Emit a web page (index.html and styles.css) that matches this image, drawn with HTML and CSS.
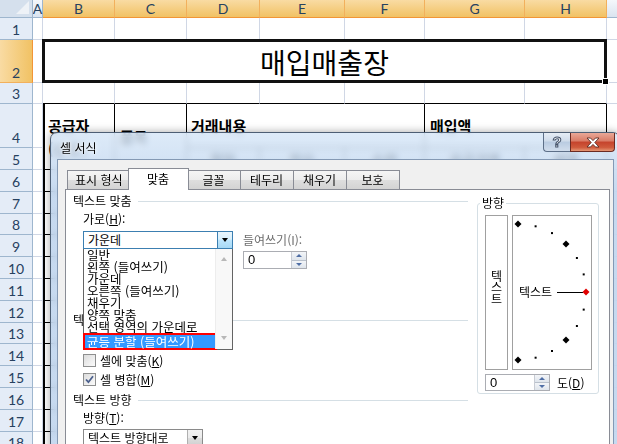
FILE: index.html
```html
<!DOCTYPE html>
<html lang="ko">
<head>
    <meta charset="UTF-8">
    <title>매입매출장 - 셀 서식</title>
    <link rel="stylesheet" href="styles.css">
</head>
<body>

<div class="window">
    <!-- 시트 눈금 (스크립트로 채움) -->
    <div class="sheet" id="sheet"></div>

    <!-- 병합된 셀과 내용 -->
    <div class="sheet sheet-over">
        <div class="merge title-cell">매입매출장</div>
        <div class="merge th b4">공급자<br>(상호)</div>
        <div class="merge th c4">품목</div>
        <div class="merge th d4">거래내용</div>
        <div class="merge th g4">매입액</div>
        <div class="merge sub d5">월일</div>
        <div class="merge sub e5">적요</div>
        <div class="merge sub f5">수량</div>
        <div class="merge sub g5">공급가액</div>
        <div class="merge sub h5">세액</div>
    </div>

    <div class="dialog">
        <div class="title-bar">
            <span class="title">셀 서식</span>
            <div class="caption-btns">
                <div class="cap-btn help">?</div>
                <div class="cap-btn close">
                    <svg width="14" height="11" viewBox="0 0 14 11">
                        <path d="M1 1 L4.5 1 L7 3.6 L9.5 1 L13 1 L8.8 5.5 L13 10 L9.5 10 L7 7.4 L4.5 10 L1 10 L5.2 5.5 Z" fill="#fff" stroke="#5a2a22" stroke-width="0.9"/>
                    </svg>
                </div>
            </div>
        </div>

        <div class="client">
            <div class="tabs">
                <div class="tab">표시 형식</div>
                <div class="tab active">맞춤</div>
                <div class="tab">글꼴</div>
                <div class="tab">테두리</div>
                <div class="tab">채우기</div>
                <div class="tab">보호</div>
            </div>

            <div class="panel">
                <div class="left-col">
                    <div class="group-title">텍스트 맞춤</div>
                    <div class="field-label">가로(<u>H</u>):</div>
                    <div class="combo-row">
                        <div class="combo-wrap">
                            <div class="combo hot">
                                <span class="combo-text">가운데</span>
                                <span class="drop"></span>
                            </div>
                            <div class="droplist">
                                <ul>
                                    <li>일반</li>
                                    <li>왼쪽 (들여쓰기)</li>
                                    <li>가운데</li>
                                    <li>오른쪽 (들여쓰기)</li>
                                    <li>채우기</li>
                                    <li>양쪽 맞춤</li>
                                    <li>선택 영역의 가운데로</li>
                                    <li class="pick">균등 분할 (들여쓰기)</li>
                                </ul>
                                <div class="list-scroll">
                                    <span class="arr up"></span>
                                    <span class="arr down"></span>
                                </div>
                            </div>
                        </div>
                        <div class="indent">
                            <div class="indent-label">들여쓰기(I):</div>
                            <div class="spin">
                                <span class="spin-val">0</span>
                                <span class="spin-btns"><i class="s-up"></i><i class="s-down"></i></span>
                            </div>
                        </div>
                    </div>

                    <div class="group-title ctrl">텍스트 조정</div>
                    <div class="check first"><span class="box"></span>셀에 맞춤(<u>K</u>)</div>
                    <div class="check"><span class="box on">
                        <svg width="9" height="9" viewBox="0 0 9 9"><path d="M1 4.5 L3.4 7.2 L8 1.2" fill="none" stroke="#4a5f8c" stroke-width="1.8"/></svg>
                    </span>셀 병합(<u>M</u>)</div>

                    <div class="group-title dir-title">텍스트 방향</div>
                    <div class="field-label">방향(<u>T</u>):</div>
                    <div class="combo dir-combo">
                        <span class="combo-text">텍스트 방향대로</span>
                        <span class="drop plain"></span>
                    </div>
                </div>

                <fieldset class="orient">
                    <legend>방향</legend>
                    <div class="orient-boxes">
                        <div class="vtext">텍스트</div>
                        <div class="dial">
                            <svg width="78" height="153" viewBox="0 0 78 153">
                                <g fill="#000">
                                    <rect x="21.6" y="9.3" width="2" height="2"/>
                                    <rect x="38" y="16.1" width="2" height="2"/>
                                    <rect x="62.9" y="41" width="2" height="2"/>
                                    <rect x="69.7" y="57.4" width="2" height="2"/>
                                    <rect x="69.7" y="92.6" width="2" height="2"/>
                                    <rect x="62.9" y="109" width="2" height="2"/>
                                    <rect x="38" y="134" width="2" height="2"/>
                                    <rect x="21.6" y="140.7" width="2" height="2"/>
                                    <path d="M5 4.5 L8.5 8 L5 11.5 L1.5 8 Z"/>
                                    <path d="M53 24.5 L56.5 28 L53 31.5 L49.5 28 Z"/>
                                    <path d="M53 120.5 L56.5 124 L53 127.5 L49.5 124 Z"/>
                                    <path d="M5 140.5 L8.5 144 L5 147.5 L1.5 144 Z"/>
                                </g>
                                <text x="6" y="80.5" class="dial-text">텍스트</text>
                                <line x1="44" y1="76.5" x2="70" y2="76.5" stroke="#000" stroke-width="1"/>
                                <path d="M73 72.5 L76.5 76 L73 79.5 L69.5 76 Z" fill="#e00000"/>
                            </svg>
                        </div>
                    </div>
                    <div class="deg-row">
                        <div class="spin deg">
                            <span class="spin-val">0</span>
                            <span class="spin-btns"><i class="s-up"></i><i class="s-down"></i></span>
                        </div>
                        <span class="deg-label">도(<u>D</u>)</span>
                    </div>
                </fieldset>
            </div>
        </div>
    </div>
</div>

<script>
    const sheet = document.getElementById('sheet');
    const cols = ['A', 'B', 'C', 'D', 'E', 'F', 'G', 'H', 'I'];
    const rowCount = 18;

    function addCell(cls, text) {
        const div = document.createElement('div');
        div.className = cls;
        if (text !== undefined) div.textContent = text;
        sheet.appendChild(div);
    }

    // 머리글 행
    addCell('corner');
    cols.forEach((c, i) => addCell('col-head' + (i >= 1 && i <= 7 ? ' sel' : ''), c));

    // 데이터 행
    for (let r = 1; r <= rowCount; r++) {
        addCell('row-head' + (r === 2 ? ' sel' : ''), r);
        cols.forEach((c, i) => {
            let cls = 'cell';
            if (i >= 1 && i <= 7) {
                if (r === 3) cls += ' tb-top';
                if (r >= 4) cls += ' tb';
                if (i === 1 && r >= 4) cls += ' tb-left';
            }
            addCell(cls);
        });
    }
</script>

</body>
</html>
```

FILE: styles.css
```css
body {
    margin: 0;
    background: #fff;
    font-family: "Noto Sans CJK KR", sans-serif;
    font-size: 12px;
    color: #000;
}
.window {
    position: relative;
    width: 617px;
    height: 444px;
    overflow: hidden;
}

/* ---- 시트 ---- */
.sheet {
    display: grid;
    grid-template-columns: 33px 10px 72px 72px 73px 85px 80px 100px 82px 40px;
    grid-template-rows: 18px 22px 43px 21px 44px 22px repeat(13, 21.8px);
}
.sheet > div {
    box-sizing: border-box;
}
.sheet-over {
    position: absolute;
    left: 0;
    top: 0;
}
.corner {
    position: relative;
    background: #d5e0ed;
    border-right: 1px solid #9eb6ce;
    border-bottom: 1px solid #9eb6ce;
}
.corner::after {
    content: "";
    position: absolute;
    right: 3px;
    bottom: 3px;
    border-left: 13px solid transparent;
    border-bottom: 13px solid #eef2f7;
}
.col-head, .row-head {
    font-family: Lato, "Liberation Sans", sans-serif;
    font-size: 14px;
    color: #27415f;
    display: flex;
    justify-content: center;
}
.col-head {
    align-items: center;
    background: linear-gradient(#f4f7fb, #dbe4f0);
    border-right: 1px solid #9eb6ce;
    border-bottom: 1px solid #9eb6ce;
}
.col-head.sel {
    background: linear-gradient(#f9dba3, #f1c264);
    border-right: 1px solid #f2b05c;
    border-bottom: 1px solid #f29536;
}
.row-head {
    align-items: flex-end;
    padding-bottom: 1px;
    background: #e4ecf7;
    border-right: 1px solid #9eb6ce;
    border-bottom: 1px solid #9eb6ce;
}
.row-head.sel {
    background: linear-gradient(to right, #f9dba3, #f1c264);
    border-right: 1px solid #f29536;
    border-bottom: 1px solid #f2b05c;
}
.cell {
    background: #fff;
    border-right: 1px solid #d0d7e5;
    border-bottom: 1px solid #d0d7e5;
}
.cell.tb-top {
    border-bottom: 1px solid #000;
}
.cell.tb {
    border-right: 1px solid #000;
    border-bottom: 1px solid #000;
}
.cell.tb-left {
    box-shadow: inset 2px 0 0 #000;
}

.merge {
    background: #fff;
    border-right: 1px solid #000;
    border-bottom: 1px solid #000;
    display: flex;
    align-items: center;
}
.title-cell {
    grid-row: 3;
    grid-column: 3 / 10;
    position: relative;
    margin: -1px 0 0 -1px;
    border: 3px solid #111;
    justify-content: center;
    font-size: 28px;
    padding-top: 2px;
}
.title-cell::after {
    content: "";
    position: absolute;
    right: -5px;
    bottom: -5px;
    width: 5px;
    height: 5px;
    background: #000;
    border: 1px solid #fff;
}
.th {
    font-size: 15px;
    font-weight: bold;
    padding-left: 5px;
}
.b4 { grid-row: 5 / 7; grid-column: 3; line-height: 23px; box-shadow: inset 2px 0 0 #000; }
.c4 { grid-row: 5 / 7; grid-column: 4; }
.d4 { grid-row: 5; grid-column: 5 / 8; padding-left: 4px; }
.g4 { grid-row: 5; grid-column: 8 / 10; }
.sub {
    grid-row: 6;
    justify-content: center;
    font-size: 14px;
    font-weight: bold;
}
.d5 { grid-column: 5; }
.e5 { grid-column: 6; }
.f5 { grid-column: 7; }
.g5 { grid-column: 8; }
.h5 { grid-column: 9; }

/* ---- 대화 상자 ---- */
.dialog {
    position: absolute;
    left: 50px;
    top: 132px;
    width: 570px;
    height: 330px;
    box-sizing: border-box;
    border: 1px solid #4d5e74;
    border-radius: 7px 7px 0 0;
    background: linear-gradient(rgba(214, 230, 247, 0.82), rgba(186, 209, 236, 0.82) 60px);
    backdrop-filter: blur(3px);
    box-shadow: 0 0 8px rgba(0, 0, 0, 0.35);
}
.title-bar {
    height: 26px;
    display: flex;
    align-items: center;
    padding-left: 9px;
}
.title {
    padding-top: 3px;
    text-shadow: 0 0 6px #fff, 0 0 3px #fff;
}
.caption-btns {
    margin-left: auto;
    margin-right: 4px;
    align-self: flex-start;
    display: flex;
}
.cap-btn {
    height: 19px;
    box-sizing: border-box;
    border: 1px solid #5d6f88;
    border-top: none;
    display: flex;
    align-items: center;
    justify-content: center;
}
.help {
    width: 27px;
    border-radius: 0 0 0 4px;
    border-right: none;
    background: linear-gradient(#e6edf6, #cfdbea 45%, #b9cbe1 50%, #d1ddec);
    font-family: "Liberation Sans", sans-serif;
    font-weight: bold;
    font-size: 15px;
    color: #fff;
    -webkit-text-stroke: 1px #45536a;
    padding-bottom: 1px;
}
.close {
    width: 45px;
    border-radius: 0 0 4px 0;
    border-color: #6b2b22;
    background: linear-gradient(#e9a897, #d97b66 45%, #c5432c 50%, #cf5a3c 80%, #e59775);
}

.client {
    margin: 0 5px 0 6px;
    height: 300px;
    border: 1px solid #8499b4;
    background: #f0f0f0;
}
.tabs {
    display: flex;
    align-items: flex-end;
    height: 21px;
    margin-top: 8px;
    padding-left: 9px;
    position: relative;
    z-index: 1;
}
.tab {
    height: 19px;
    min-width: 54px;
    box-sizing: border-box;
    padding: 0 7px;
    margin-right: -1px;
    border: 1px solid #898c95;
    border-bottom: none;
    background: linear-gradient(#f5f5f5, #ececec 50%, #dedede 51%, #d3d3d3);
    text-align: center;
    line-height: 18px;
}
.tab.active {
    height: 22px;
    min-width: 61px;
    margin: 0 -2px -1px -2px;
    background: #fff;
    line-height: 19px;
    position: relative;
    z-index: 2;
}

.panel {
    margin: 0 3px 0 7px;
    height: 270px;
    border: 1px solid #898c95;
    background: #fff;
    display: flex;
    align-items: flex-start;
    padding: 3px 8px 0 7px;
}
.left-col {
    width: 395px;
}
.group-title {
    display: flex;
    align-items: center;
    height: 16px;
    line-height: 16px;
}
.group-title::after {
    content: "";
    flex: 1;
    margin-left: 6px;
    border-top: 1px solid #d5dfe5;
}
.group-title.ctrl {
    margin-top: 43px;
}
.group-title.dir-title {
    margin-top: 3px;
}
.field-label {
    height: 16px;
    line-height: 16px;
    margin: 2px 0 0 10px;
}

.combo-row {
    display: flex;
    align-items: flex-start;
    margin: 4px 0 0 10px;
}
.combo-wrap {
    position: relative;
}
.combo {
    width: 150px;
    height: 18px;
    box-sizing: border-box;
    border: 1px solid #8a8a8a;
    background: #fff;
    display: flex;
    align-items: center;
}
.combo-text {
    padding-left: 4px;
    line-height: 16px;
    white-space: nowrap;
}
.combo.hot {
    border-color: #3c7fb1;
}
.drop {
    margin-left: auto;
    width: 15px;
    height: 16px;
    box-sizing: border-box;
    border-left: 1px solid #3c7fb1;
    background: linear-gradient(#eaf6fd, #d9f0fc 45%, #bee6fd 50%, #a7d9f5);
    display: flex;
    align-items: center;
    justify-content: center;
}
.drop::after {
    content: "";
    border-left: 3px solid transparent;
    border-right: 3px solid transparent;
    border-top: 4px solid #000;
}
.drop.plain {
    border-left: 1px solid #b0b0b0;
    background: linear-gradient(#f2f2f2, #ebebeb 50%, #dddddd 51%, #cfcfcf);
}
.dir-combo {
    width: 120px;
    margin: 3px 0 0 10px;
}

.droplist {
    position: absolute;
    left: 0;
    top: 18px;
    width: 150px;
    height: 101px;
    box-sizing: border-box;
    border: 1px solid #646464;
    border-top: none;
    background: #fff;
    z-index: 3;
}
.droplist ul {
    list-style: none;
    margin: 0;
    padding: 0;
    width: 132px;
}
.droplist li {
    height: 12px;
    line-height: 12px;
    padding-left: 3px;
    white-space: nowrap;
    font-size: 12.5px;
}
.droplist li.pick {
    height: 17px;
    line-height: 14px;
    box-sizing: border-box;
    width: 134px;
    margin: 0 0 0 -1px;
    padding-left: 2px;
    border: 2px solid #ff0000;
    background: #3399ff;
    color: #fff;
}
.list-scroll {
    position: absolute;
    right: 0;
    top: 0;
    bottom: 0;
    width: 16px;
    background: #f8f8f8;
    border-left: 1px solid #ededed;
}
.arr {
    position: absolute;
    left: 5px;
    border-left: 3px solid transparent;
    border-right: 3px solid transparent;
}
.arr.up {
    top: 8px;
    border-bottom: 4px solid #b8b8b8;
}
.arr.down {
    bottom: 9px;
    border-top: 4px solid #b8b8b8;
}

.indent {
    margin-left: 10px;
    margin-top: 1px;
}
.indent-label {
    height: 16px;
    line-height: 16px;
    color: #6d6d6d;
}
.spin {
    width: 64px;
    height: 18px;
    box-sizing: border-box;
    border: 1px solid #abadb3;
    background: #fff;
    display: flex;
    margin-top: 3px;
}
.spin-val {
    padding-left: 4px;
    line-height: 16px;
    font-family: "Liberation Sans", sans-serif;
    font-size: 13px;
}
.spin-btns {
    margin-left: auto;
    width: 14px;
    display: flex;
    flex-direction: column;
    border-left: 1px solid #c8ccd4;
}
.spin-btns i {
    flex: 1;
    display: flex;
    align-items: center;
    justify-content: center;
    background: linear-gradient(#f3f5f8, #dfe5ec);
}
.spin-btns i + i {
    border-top: 1px solid #b9c1cc;
}
.s-up::after, .s-down::after {
    content: "";
    border-left: 3px solid transparent;
    border-right: 3px solid transparent;
}
.s-up::after {
    border-bottom: 3px solid #4f6ea5;
}
.s-down::after {
    border-top: 3px solid #4f6ea5;
}

.check {
    display: flex;
    align-items: center;
    height: 19px;
    margin-left: 10px;
    white-space: nowrap;
}
.check.first {
    margin-top: 23px;
}
.box {
    width: 13px;
    height: 13px;
    box-sizing: border-box;
    border: 1px solid #8e8f8f;
    background: linear-gradient(135deg, #dcdcdc, #fbfbfb);
    margin-right: 4px;
    display: flex;
    align-items: center;
    justify-content: center;
}

/* ---- 방향 ---- */
.orient {
    width: 122px;
    box-sizing: border-box;
    margin: 2px 0 0 9px;
    padding: 4px 6px 2px 7px;
    border: 1px solid #d5dfe5;
    border-radius: 3px;
}
.orient legend {
    padding: 0 2px;
    margin-left: -5px;
    line-height: 16px;
}
.orient-boxes {
    display: flex;
    gap: 4px;
}
.vtext, .dial {
    height: 155px;
    box-sizing: border-box;
    border: 1px solid #a0a0a0;
}
.vtext {
    width: 23px;
    writing-mode: vertical-rl;
    display: flex;
    align-items: center;
    justify-content: center;
    padding-bottom: 10px;
    letter-spacing: -0.5px;
}
.dial {
    width: 80px;
}
.dial svg {
    display: block;
}
.dial-text {
    font-family: "Noto Sans CJK KR", sans-serif;
    font-size: 12px;
}
.deg-row {
    display: flex;
    align-items: center;
    margin-top: 4px;
}
.spin.deg {
    width: 65px;
    height: 17px;
    margin-top: 0;
}
.deg-label {
    margin-left: 7px;
}
```
